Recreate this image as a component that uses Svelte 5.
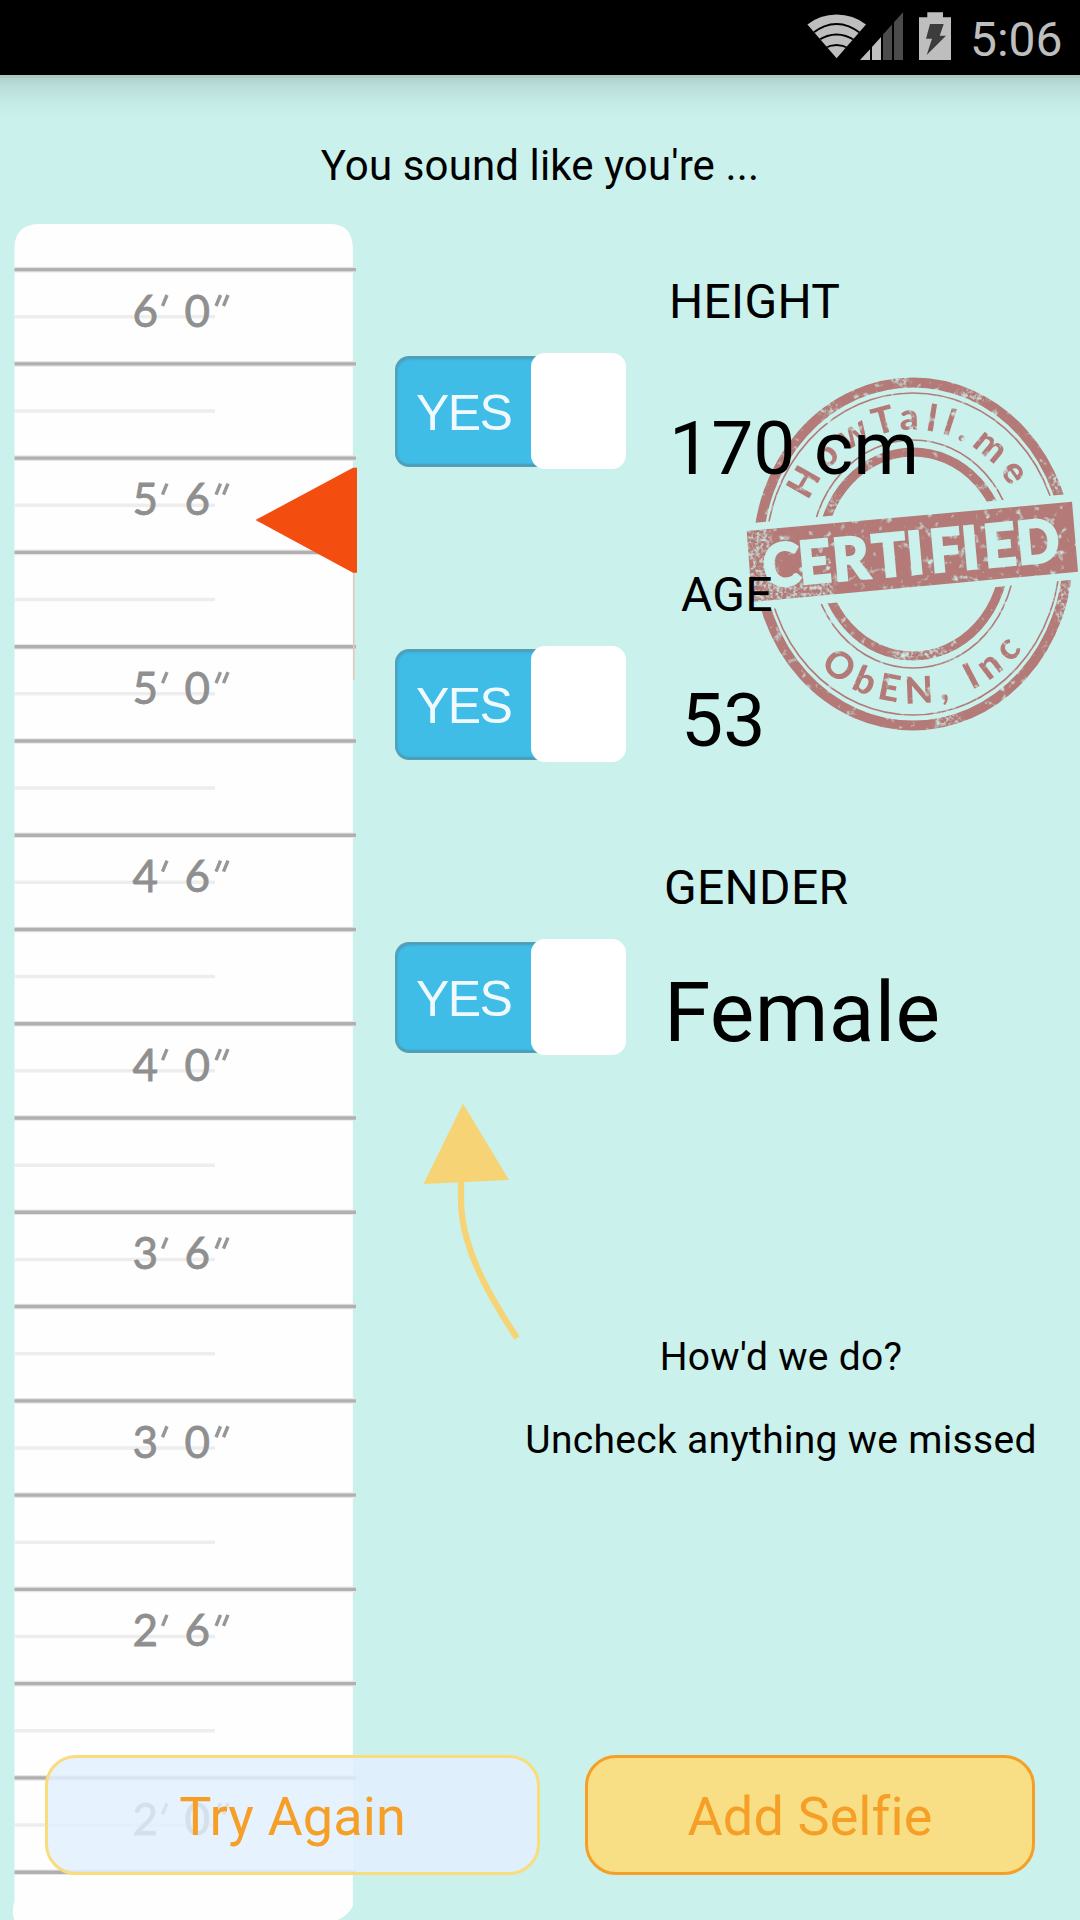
<script>
  const results = [
    { key: 'height', label: 'HEIGHT', value: '170 cm' },
    { key: 'age', label: 'AGE', value: '53' },
    { key: 'gender', label: 'GENDER', value: 'Female' }
  ];

  const first = 269.6;
  const step = 94.27;
  const ticks = Array.from({ length: 17 }, (_, i) => first + i * step);
  const marks = [[6, 0], [5, 6], [5, 0], [4, 6], [4, 0], [3, 6], [3, 0], [2, 6], [2, 0]]
    .map(([feet, inches], i) => ({ feet, inches, y: 326.5 + i * step * 2 }));
</script>

<div class="app">
  <header class="status">
    <svg class="icons" viewBox="800 0 160 75">
      <clipPath id="fan"><path d="M836.6 58.3L807.4 24.6Q820 14.6 836.6 14.6T866 24.6Z" /></clipPath>
      <g clip-path="url(#fan)">
        <rect x="800" y="10" width="70" height="50" fill="#bebebe" />
        <g fill="none" stroke="#000" stroke-width="2">
          <path d="M812 33.5Q836.6 14.5 861 33.5" />
          <path d="M818 40.5Q836.6 28.5 855 40.5" />
          <path d="M824 48.5Q836.6 41.5 849 48.5" />
        </g>
      </g>
      <path fill="#bebebe" d="M860 60L870 49.3V60ZM872 60V47L881 37V60Z" />
      <path fill="#4b4b4b" d="M883 60V34.6L892 24.6V60ZM894 60V22.3L903 12.3V60Z" />
      <path fill="#bebebe" d="M927.3 12.3H943V17.3H951V60H919V17.3H927.3Z" />
      <path fill="#3c3c3c" d="M930 24H943.7L939.7 35.7H946L926.7 55L932 38.7H926Z" />
    </svg>
    <span class="clock">5:06</span>
  </header>

  <h1>You sound like you're ...</h1>

  <main>
    <svg class="ruler" viewBox="0 224 380 1696">
      <path fill="#fefefe" d="M14.5 246Q16 224 40 224H330Q351 224 352.8 246V1906Q349 1915 336 1921H15Q11 1915 14.5 1900Z" />
      {#each ticks as y}
        <path d="M14.5 {y + 47.1}H215" stroke="#ededed" stroke-width="3.5" />
      {/each}
      {#each [...ticks, first + step * 17] as y}
        <path d="M14.5 {y}H356" stroke="#e6e6e6" stroke-width="5.6" />
        <path d="M14.5 {y}H356" stroke="#b0b0b0" stroke-width="3.4" />
      {/each}
      {#each marks as m}
        <text x="132.5" y={m.y}>{m.feet}</text>
        <text x="184.5" y={m.y}>{m.inches}</text>
        <path
          d="M167 {m.y - 31.5}L162.500 {m.y - 20.5}M220.500 {m.y - 31.5}L216 {m.y - 20.5}M228 {m.y - 31.5}L223.500 {m.y - 20.5}"
          stroke="#979797" stroke-width="3.4" />
      {/each}
      <path d="M353.800 572V680" stroke="#e3cbb9" stroke-width="1.600" />
      <path d="M255.500 520L353 467.700H357V572.700H353Z" fill="#f44d10" />
    </svg>

    <section class="panel">
      {#each results as r}
        <div class="row {r.key}">
          <div class="switch">
            <span class="on">YES</span>
            <span class="knob"></span>
          </div>
          <div class="detail">
            <div class="label">{r.label}</div>
            <div class="value">{r.value}</div>
          </div>
        </div>
      {/each}

      <svg class="arrow" viewBox="420 1100 104 242">
        <path d="M461 1180V1200C461 1245 487 1293 517 1338" fill="none" stroke="#f6d475" stroke-width="6.2" />
        <path d="M463 1103.500L509 1180L423.500 1184Z" fill="#f6d475" />
      </svg>

      <div class="hints">
        <p>How'd we do?</p>
        <p>Uncheck anything we missed</p>
      </div>
    </section>
  </main>

  <svg class="stamp" viewBox="740 370 340 370">
    <defs>
      <filter id="worn" filterUnits="userSpaceOnUse" x="740" y="370" width="340" height="370" color-interpolation-filters="sRGB">
        <feTurbulence type="fractalNoise" baseFrequency="0.12" numOctaves="3" seed="11" result="noise" />
        <feColorMatrix in="noise" type="matrix" values="0 0 0 0 0  0 0 0 0 0  0 0 0 0 0  0 0 0 4 -0.55" result="holes" />
        <feComposite in="SourceGraphic" in2="holes" operator="in" result="ink" />
        <feGaussianBlur in="ink" stdDeviation="0.5" />
      </filter>
      <filter id="scuff" filterUnits="userSpaceOnUse" x="740" y="370" width="340" height="370" color-interpolation-filters="sRGB">
        <feTurbulence type="fractalNoise" baseFrequency="0.3" numOctaves="2" seed="4" result="noise" />
        <feColorMatrix in="noise" type="matrix" values="0 0 0 0 0  0 0 0 0 0  0 0 0 0 0  0 0 0 4 -1.75" result="grain" />
        <feGaussianBlur in="SourceGraphic" stdDeviation="2" result="soft" />
        <feComposite in="soft" in2="grain" operator="in" />
      </filter>
      <clipPath id="outside">
        <path d="M740 370H1080V493L740 524ZM740 612L1080 579V740H740Z" />
      </clipPath>
      <path id="arc-top" d="M808.500 501A115 123 0 0 1 1015 496" />
      <path id="arc-bottom" d="M820 666.500A142 149 0 0 0 1032 636" />
    </defs>
    <g filter="url(#worn)">
      <g clip-path="url(#outside)" fill="none" stroke="#b37a77">
        <ellipse cx="913" cy="554" rx="155" ry="171.500" stroke-width="10" />
        <ellipse cx="913" cy="554" rx="147" ry="161" stroke-width="1.600" />
        <ellipse cx="913" cy="554" rx="102" ry="114" stroke-width="1.600" />
        <ellipse cx="913" cy="554" rx="92" ry="102" stroke-width="9" />
      </g>
      <path d="M746.700 531L1072 501.700L1078 571.700L752 602Z" fill="#b37a77" />
      <text class="ring"><textPath href="#arc-top" textLength="252">HowTall.me</textPath></text>
      <text class="ring"><textPath href="#arc-bottom" textLength="228">ObEN, Inc</textPath></text>
    </g>
    <g filter="url(#scuff)" fill="#caf1ec" opacity="0.75">
      <path d="M744 528L768 526L785 600L750 606ZM770 585L835 580V600H770Z" />
      <ellipse cx="947" cy="718" rx="14" ry="9" />
      <ellipse cx="1063" cy="604" rx="9" ry="20" />
      <ellipse cx="902" cy="382" rx="9" ry="5" />
      <ellipse cx="828" cy="408" rx="12" ry="7" />
      <ellipse cx="972" cy="396" rx="18" ry="7" />
      <ellipse cx="925" cy="655" rx="38" ry="8" />
      <ellipse cx="838" cy="506" rx="10" ry="10" />
      <ellipse cx="1057" cy="482" rx="10" ry="10" />
    </g>
    <text class="certified" transform="translate(766 587.500) rotate(-5.200) scale(0.95 1)" x="-1 36.500 72.500 114.500 151 175 209 232 267">CERTIFIED</text>
  </svg>

  <footer>
    <button class="again">Try Again</button>
    <button class="selfie">Add Selfie</button>
  </footer>
</div>

<style>
  :global(body) {
    margin: 0;
  }
  .app {
    position: relative;
    display: flex;
    flex-direction: column;
    width: 1080px;
    height: 1920px;
    overflow: hidden;
    background: #caf1ec;
    color: #000;
    font-family: Roboto, sans-serif;
  }
  .status {
    display: flex;
    flex: none;
    height: 75px;
    background: #000;
    color: #bebebe;
  }
  .icons {
    width: 160px;
    height: 75px;
    margin-left: 800px;
  }
  .clock {
    margin-left: 10px;
    padding-top: 12px;
    font-size: 48px;
    line-height: 56px;
  }
  h1 {
    flex: none;
    box-sizing: border-box;
    height: 149px;
    margin: 0;
    padding-top: 66px;
    background: linear-gradient(#a9c9c2 0 3px, #b3d4ce 3px, #bce0db 13px, #c4eae5 26px, #caf1ec 42px);
    font-size: 42px;
    font-weight: 400;
    letter-spacing: 0.12px;
    line-height: 50px;
    text-align: center;
  }
  main {
    display: flex;
    height: 1696px;
  }
  .ruler {
    flex: none;
    width: 380px;
    height: 1696px;
  }
  .ruler text {
    fill: #8f8f8f;
    stroke: #8f8f8f;
    stroke-width: 0.8px;
    font-family: Lato, sans-serif;
    font-size: 44px;
  }
  .panel {
    position: relative;
    z-index: 1;
    width: 700px;
    padding-top: 41px;
  }
  .row {
    display: flex;
    height: 293px;
    padding-left: 15px;
  }
  .switch {
    display: flex;
    align-items: center;
    width: 231px;
    height: 116px;
    margin-top: 88px;
  }
  .on {
    box-sizing: border-box;
    width: 150px;
    height: 111px;
    padding-left: 20px;
    border: 1.5px solid #5d9fb2;
    border-right: 0;
    border-radius: 14px 0 0 14px;
    background: #40bde7;
    box-shadow: inset 1px 2px 3px #4b9ab5, inset 0 -2px 2px #4b9ab5;
    color: #f0fafe;
    font-family: "Liberation Sans", Arial, sans-serif;
    font-size: 50px;
    letter-spacing: -1.6px;
    line-height: 113px;
  }
  .knob {
    width: 95px;
    height: 116px;
    margin-left: -14px;
    border-radius: 14px;
    background: #fff;
  }
  .detail {
    padding-top: 9px;
    white-space: nowrap;
  }
  .height .detail {
    margin-left: 43px;
  }
  .age .detail {
    margin-left: 55px;
  }
  .gender .detail {
    margin-left: 38px;
  }
  .label {
    font-size: 48px;
    letter-spacing: 0.3px;
    line-height: 56px;
  }
  .value {
    margin-top: 74px;
    font-size: 75px;
    line-height: 88px;
  }
  .age .value {
    margin-top: 53px;
  }
  .gender .value {
    margin-top: 48px;
    font-size: 84px;
    letter-spacing: 0.3px;
    line-height: 98px;
  }
  .arrow {
    display: block;
    width: 104px;
    height: 242px;
    margin: -44px 0 -8px 40px;
  }
  .hints {
    display: flex;
    flex-direction: column;
    gap: 37px;
    width: 602px;
    padding-left: 100px;
    font-size: 39px;
    letter-spacing: 0.3px;
    line-height: 46px;
    text-align: center;
  }
  .hints p {
    margin: 0;
  }
  .stamp {
    position: absolute;
    left: 740px;
    top: 370px;
    width: 340px;
    height: 370px;
  }
  .ring {
    fill: #b37a77;
    font-family: Lato, sans-serif;
    font-size: 37px;
    font-weight: 900;
  }
  .certified {
    fill: #caf1ec;
    stroke: #caf1ec;
    stroke-width: 2.4px;
    font-family: Lato, sans-serif;
    font-size: 59px;
    font-weight: 900;
  }
  footer {
    position: absolute;
    z-index: 2;
    left: 45px;
    bottom: 45px;
    display: flex;
    gap: 45px;
  }
  button {
    box-sizing: border-box;
    height: 120px;
    padding: 3px 0 0;
    border: 3px solid;
    border-radius: 31px;
    color: #f59f27;
    font-family: Roboto, sans-serif;
    font-size: 54px;
    letter-spacing: 0.1px;
  }
  .again {
    width: 495px;
    border-color: #f9dc7b;
    background: rgba(226, 240, 255, 0.84);
  }
  .selfie {
    width: 450px;
    border-color: #f59f27;
    background: #f8df85;
  }
</style>
